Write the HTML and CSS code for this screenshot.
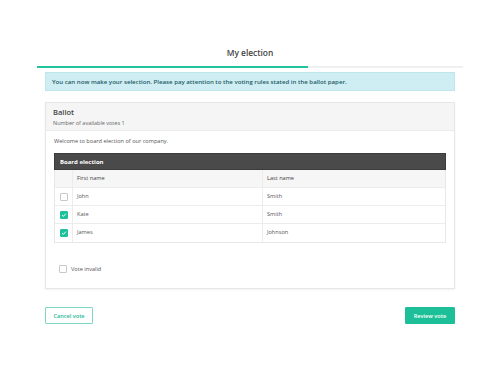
FILE: index.html
```html
<!DOCTYPE html>
<html>
<head>
<meta charset="utf-8">
<link rel="stylesheet" href="styles.css">
</head>
<body>
<div class="page">
  <h1 class="title">My election</h1>
  <div class="progress"><div class="progress-fill"></div></div>
  <div class="content">
    <div class="alert">You can now make your selection. Please pay attention to the voting rules stated in the ballot paper.</div>
    <div class="card">
      <div class="card-head">
        <div class="card-title">Ballot</div>
        <div class="card-sub">Number of available votes 1</div>
      </div>
      <div class="card-body">
        <p class="welcome">Welcome to board election of our company.</p>
        <div class="table">
          <div class="table-caption">Board election</div>
          <div class="row head">
            <div class="cell check"></div>
            <div class="cell">First name</div>
            <div class="cell">Last name</div>
          </div>
          <div class="row">
            <div class="cell check"><span class="box"></span></div>
            <div class="cell">John</div>
            <div class="cell">Smith</div>
          </div>
          <div class="row">
            <div class="cell check"><span class="box on"><svg viewBox="0 0 8 8" width="6" height="6"><path d="M1.5 4.2 L3.2 5.8 L6.5 2.3" fill="none" stroke="#fff" stroke-width="1.3"/></svg></span></div>
            <div class="cell">Kate</div>
            <div class="cell">Smith</div>
          </div>
          <div class="row">
            <div class="cell check"><span class="box on"><svg viewBox="0 0 8 8" width="6" height="6"><path d="M1.5 4.2 L3.2 5.8 L6.5 2.3" fill="none" stroke="#fff" stroke-width="1.3"/></svg></span></div>
            <div class="cell">James</div>
            <div class="cell">Johnson</div>
          </div>
        </div>
        <label class="invalid"><span class="box"></span>Vote invalid</label>
      </div>
    </div>
    <div class="actions">
      <button class="btn outline">Cancel vote</button>
      <button class="btn solid">Review vote</button>
    </div>
  </div>
</div>
</body>
</html>
```
FILE: styles.css
```css
* { box-sizing: border-box; }
body {
  margin: 0;
  background: #fff;
  font-family: "Open Sans", "DejaVu Sans", sans-serif;
  color: #555;
}
.page {
  padding: 46px 37px 0 37px;
  width: 500px;
}
.title {
  margin: 0;
  height: 20px;
  font-size: 8.4px;
  font-weight: 600;
  color: #444;
  text-align: center;
  line-height: 14px;
}
.progress {
  height: 2px;
  background: #f0f0f0;
  width: 426px;
}
.progress-fill {
  height: 2px;
  width: 271px;
  background: #20c4a0;
}
.content {
  padding: 4px 8px 0 8px;
}
.alert {
  height: 19px;
  background: #cfeef3;
  border: 1px solid #bfe6ec;
  color: #1f5a66;
  font-size: 6.1px;
  font-weight: 600;
  padding: 0 6px;
  line-height: 17px;
  white-space: nowrap;
}
.card {
  margin-top: 11px;
  border: 1px solid #e6e6e6;
  box-shadow: 0 1px 2px rgba(0,0,0,0.06);
  height: 187px;
}
.card-head {
  background: #f5f5f5;
  border-bottom: 1px solid #ececec;
  height: 28px;
  padding: 4px 7px 0 7px;
}
.card-title {
  font-size: 7.5px;
  font-weight: 600;
  color: #444;
  line-height: 10px;
}
.card-sub {
  font-size: 5.5px;
  color: #666;
  margin-top: 2px;
  line-height: 8px;
}
.card-body {
  padding: 6px 8px 0 8px;
}
.welcome {
  margin: 0 0 8px 0;
  font-size: 5.6px;
  color: #555;
  line-height: 8px;
}
.table {
  border: 1px solid #e8e8e8;
  border-top: none;
}
.table-caption {
  background: #4a4a4a;
  color: #fff;
  font-size: 6px;
  font-weight: 700;
  height: 17px;
  line-height: 17px;
  padding-left: 5px;
  border: 1px solid #3c3c3c;
  margin: 0 -1px;
}
.row {
  display: grid;
  grid-template-columns: 17px 190px 1fr;
  height: 18px;
  border-bottom: 1px solid #ececec;
}
.row:last-child { border-bottom: none; }
.row.head { background: #f6f6f6; }
.cell {
  font-size: 5.6px;
  color: #555;
  line-height: 17px;
  padding-left: 4px;
  border-left: 1px solid #ececec;
}
.row.head .cell { color: #444; }
.cell.check {
  border-left: none;
  padding-left: 0;
  display: flex;
  align-items: center;
  justify-content: center;
}
.box {
  width: 8px;
  height: 8px;
  border: 1px solid #c8c8c8;
  border-radius: 1px;
  background: #fff;
  display: inline-flex;
  align-items: center;
  justify-content: center;
}
.box.on {
  background: #1dbf9c;
  border-color: #1dbf9c;
}
.invalid {
  display: flex;
  align-items: center;
  gap: 4px;
  margin: 22px 0 0 5px;
  font-size: 5.6px;
  color: #555;
}
.actions {
  display: flex;
  justify-content: space-between;
  margin-top: 18px;
}
.btn {
  height: 17px;
  font-family: inherit;
  font-size: 5.6px;
  font-weight: 600;
  padding: 0;
  border-radius: 1px;
  cursor: pointer;
}
.btn.outline {
  background: #fff;
  border: 1px solid #7dd9c3;
  color: #1fb996;
  width: 48px;
}
.btn.solid {
  background: #1cbf98;
  border: 1px solid #1cbf98;
  color: #fff;
  width: 50px;
}
```
